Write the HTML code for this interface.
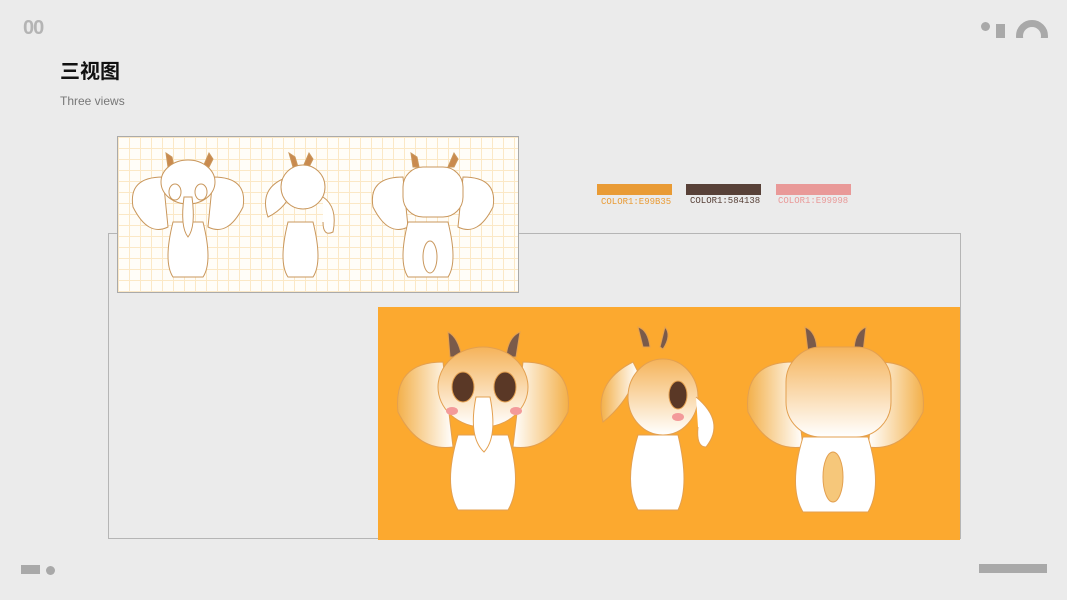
<!DOCTYPE html>
<html><head><meta charset="utf-8"><style>
body{margin:0;width:1067px;height:600px;background:#ebebeb;position:relative;overflow:hidden;font-family:"Liberation Sans","Noto Sans CJK SC",sans-serif}
.a{position:absolute}
</style></head><body>
<div class="a" style="left:23px;top:17px;font-size:20px;font-weight:bold;color:#b4b4b4;letter-spacing:-1px">00</div>
<div class="a" style="left:60px;top:55px;font-size:20px;font-weight:bold;color:#111">三视图</div>
<div class="a" style="left:60px;top:94px;font-size:12px;color:#777">Three views</div>
<div class="a" style="left:981px;top:22px;width:9px;height:9px;border-radius:50%;background:#a9a9a9"></div>
<div class="a" style="left:996px;top:24px;width:9px;height:14px;background:#a9a9a9"></div>
<div class="a" style="left:1016px;top:20px;width:32px;height:18px;overflow:hidden"><div style="width:32px;height:32px;border-radius:50%;border:7px solid #a9a9a9;box-sizing:border-box"></div></div>
<div class="a" style="left:21px;top:565px;width:19px;height:9px;background:#a9a9a9"></div>
<div class="a" style="left:46px;top:566px;width:9px;height:9px;border-radius:50%;background:#a9a9a9"></div>
<div class="a" style="left:979px;top:564px;width:68px;height:9px;background:#a9a9a9"></div>
<div class="a" style="left:108px;top:233px;width:851px;height:304px;border:1.5px solid #b5b5b5"></div>
<div class="a" style="left:117px;top:136px;width:400px;height:155px;border:1px solid #aaa;background-color:#fffdf8;background-image:linear-gradient(#fbe8c6 1px,transparent 1px),linear-gradient(90deg,#fbe8c6 1px,transparent 1px);background-size:11px 11px">
<svg width="400" height="155" fill="#fff" stroke="#c9975c" stroke-width="1">
<g><path d="M50 30 l-2-14 6 4 2 10z M85 30 l6-14 4 6-4 8z" fill="#c98a4e"/><path d="M45 40 q-35 0-30 30 q15 30 35 20z M95 40 q35 0 30 30 q-15 30 -35 20z"/><ellipse cx="70" cy="45" rx="27" ry="22"/><ellipse cx="57" cy="55" rx="6" ry="8"/><ellipse cx="83" cy="55" rx="6" ry="8"/><path d="M55 85 q-10 40 0 55 h30 q10-15 0-55z"/><path d="M66 60 q-4 30 4 40 q8-10 4-40z"/></g>
<g transform="translate(130,0)"><path d="M45 30 l-4-14 6 4 3 10z M55 30 l6-14 4 6-4 8z" fill="#c98a4e"/><path d="M40 40 q-30 10-20 40 q20-10 25-30z"/><ellipse cx="55" cy="50" rx="22" ry="22"/><path d="M40 85 q-10 40 0 55 h25 q10-15 0-55z"/><path d="M75 60 q15 10 10 35 q-10 5 -10-10"/></g>
<g transform="translate(250,0)"><path d="M45 30 l-2-14 6 4 2 10z M80 30 l6-14 4 6-4 8z" fill="#c98a4e"/><path d="M35 40 q-35 0-30 30 q15 30 35 20z M95 40 q35 0 30 30 q-15 30 -35 20z"/><rect x="35" y="30" width="60" height="50" rx="20"/><path d="M40 85 q-10 40 0 55 h40 q10-15 0-55z"/><ellipse cx="62" cy="120" rx="7" ry="16"/></g>
</svg></div>
<div class="a" style="left:597px;top:184px;width:75px;height:11px;background:#e99b35"></div>
<div class="a" style="left:686px;top:184px;width:75px;height:11px;background:#584138"></div>
<div class="a" style="left:776px;top:184px;width:75px;height:11px;background:#e99998"></div>
<div class="a" style="left:601px;top:197px;font-size:9px;color:#e99b35;font-family:'Liberation Mono',monospace">COLOR1:E99B35</div>
<div class="a" style="left:690px;top:196px;font-size:9px;color:#584138;font-family:'Liberation Mono',monospace">COLOR1:584138</div>
<div class="a" style="left:778px;top:196px;font-size:9px;color:#e99998;font-family:'Liberation Mono',monospace">COLOR1:E99998</div>
<div class="a" style="left:378px;top:307px;width:582px;height:233px;background:#fca92f">
<svg width="582" height="233">
<defs><linearGradient id="e" x1="1" y1="0" x2="0" y2="0"><stop offset="0" stop-color="#fff"/><stop offset="1" stop-color="#f3b04a"/></linearGradient>
<linearGradient id="e2" x1="0" y1="0" x2="1" y2="0"><stop offset="0" stop-color="#fff"/><stop offset="1" stop-color="#f3b04a"/></linearGradient>
<linearGradient id="h" x1="0" y1="0" x2="0" y2="1"><stop offset="0" stop-color="#f5b35a"/><stop offset="1" stop-color="#fff"/></linearGradient></defs>
<g stroke="#e3a050" stroke-width="1">
<path d="M72 50 l-2-25 q10 5 14 25z M138 50 l4-25 q-12 5-14 25z" fill="#7a5a4a"/>
<path d="M65 55 q-50 0-45 50 q20 40 55 35z" fill="url(#e)"/><path d="M145 55 q50 0 45 50 q-20 40 -55 35z" fill="url(#e2)"/>
<ellipse cx="105" cy="80" rx="45" ry="40" fill="url(#h)"/>
<ellipse cx="85" cy="80" rx="11" ry="15" fill="#5a3826"/><ellipse cx="127" cy="80" rx="11" ry="15" fill="#5a3826"/>
<ellipse cx="74" cy="104" rx="6" ry="4" fill="#f39a9a" stroke="none"/><ellipse cx="138" cy="104" rx="6" ry="4" fill="#f39a9a" stroke="none"/>
<path d="M80 128 q-15 50 0 75 h50 q15-25 0-75z" fill="#fff"/>
<path d="M98 90 q-8 40 8 55 q14-15 6-55z" fill="#fff"/>
<path d="M265 40 l-5-20 q10 3 12 20z M282 40 l5-20 q7 8-2 22z" fill="#7a5a4a"/>
<path d="M255 55 q-40 20-30 60 q25-20 35-50z" fill="url(#e)"/>
<ellipse cx="285" cy="90" rx="35" ry="38" fill="url(#h)"/>
<ellipse cx="300" cy="88" rx="9" ry="14" fill="#5a3826"/>
<ellipse cx="300" cy="110" rx="6" ry="4" fill="#f39a9a" stroke="none"/>
<path d="M260 128 q-15 50 0 75 h40 q12-25 0-75z" fill="#fff"/>
<path d="M318 90 q30 25 10 50 q-10 0-8-20" fill="#fff"/>
<path d="M430 45 l-3-25 q12 5 12 25z M485 45 l3-25 q-12 5-12 25z" fill="#7a5a4a"/>
<path d="M415 55 q-50 0-45 50 q20 40 55 35z" fill="url(#e)"/><path d="M500 55 q50 0 45 50 q-20 40 -55 35z" fill="url(#e2)"/>
<rect x="408" y="40" width="105" height="90" rx="35" fill="url(#h)"/>
<path d="M425 130 q-15 50 0 75 h65 q15-25 0-75z" fill="#fff"/>
<ellipse cx="455" cy="170" rx="10" ry="25" fill="#f6c77a"/>
</g></svg></div>
</body></html>
